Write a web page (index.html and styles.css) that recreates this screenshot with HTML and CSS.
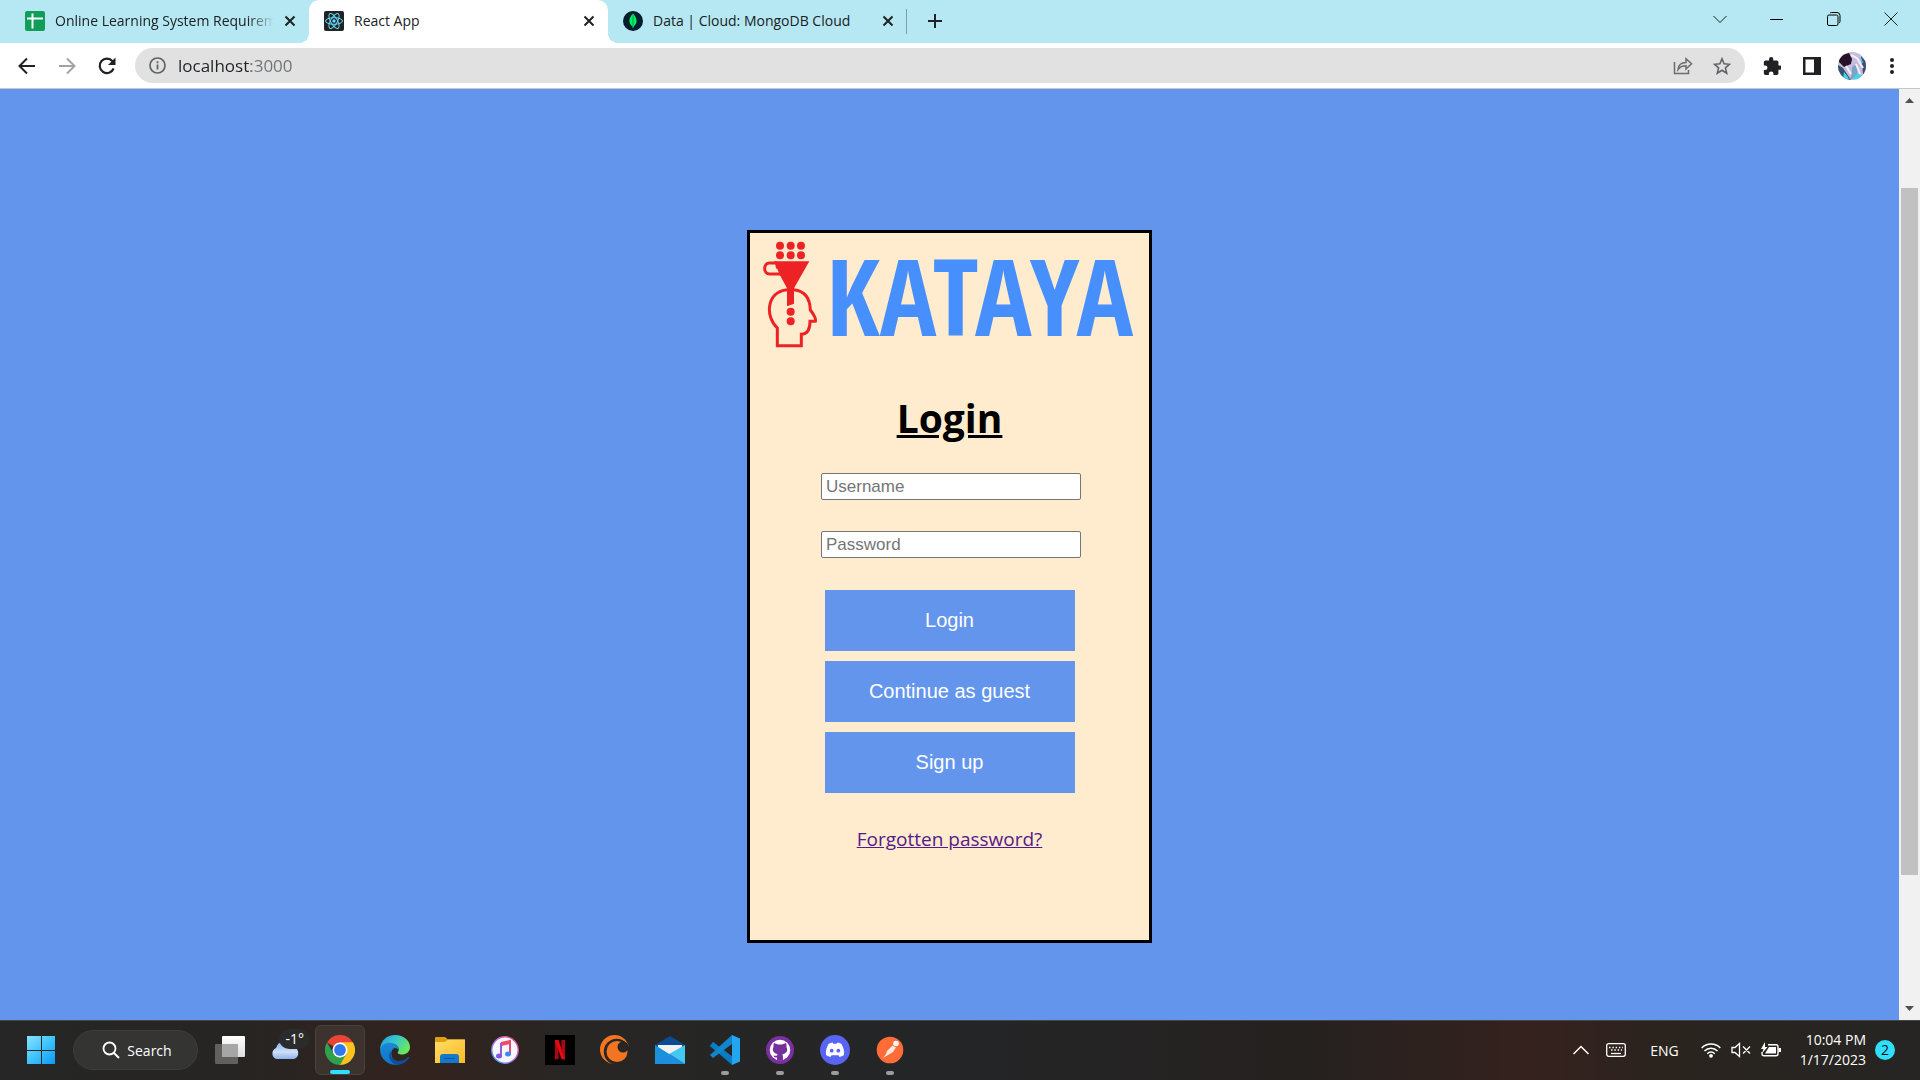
FILE: index.html
```html
<!DOCTYPE html>
<html lang="en">
<head>
<meta charset="utf-8">
<title>React App</title>
<meta name="viewport" content="width=device-width, initial-scale=1">
<link rel="stylesheet" href="styles.css">
</head>
<body>
<header class="browser">
  <div class="tabstrip">
    <div class="tab">
      <svg class="favicon" viewBox="0 0 20 20"><rect width="20" height="20" rx="2" fill="#0f9d58"/><path d="M2 7.500h16M7.500 2.500v15" stroke="#fff" stroke-width="2"/></svg>
      <span class="tab-title fade">Online Learning System Requirements</span>
      <button class="tab-close" aria-label="Close tab"><svg width="12" height="12" viewBox="0 0 12 12"><path d="M1.500 1.500l9 9M10.500 1.500l-9 9" stroke="#202124" stroke-width="2"/></svg></button>
    </div>
    <div class="tab active">
      <svg class="favicon" viewBox="0 0 20 20"><rect width="20" height="20" rx="2" fill="#222"/><g fill="none" stroke="#61dafb" stroke-width="1"><ellipse cx="10" cy="10" rx="8.500" ry="3.300"/><ellipse cx="10" cy="10" rx="8.500" ry="3.300" transform="rotate(60 10 10)"/><ellipse cx="10" cy="10" rx="8.500" ry="3.300" transform="rotate(120 10 10)"/></g><circle cx="10" cy="10" r="1.700" fill="#61dafb"/></svg>
      <span class="tab-title">React App</span>
      <button class="tab-close" aria-label="Close tab"><svg width="12" height="12" viewBox="0 0 12 12"><path d="M1.500 1.500l9 9M10.500 1.500l-9 9" stroke="#202124" stroke-width="2"/></svg></button>
    </div>
    <div class="tab last">
      <svg class="favicon" viewBox="0 0 20 20"><circle cx="10" cy="10" r="10" fill="#001e2b"/><path d="M10 2.500C13 6 13.600 8 13.600 10c0 2.600-1.600 4.400-3 5.500L10.300 17h-.6l-.3-1.500C8 14.400 6.400 12.600 6.400 10c0-2 .6-4 3.600-7.500z" fill="#00ed64"/><path d="M10 3v13" stroke="#00a94b" stroke-width="1"/></svg>
      <span class="tab-title">Data | Cloud: MongoDB Cloud</span>
      <button class="tab-close" aria-label="Close tab"><svg width="12" height="12" viewBox="0 0 12 12"><path d="M1.500 1.500l9 9M10.500 1.500l-9 9" stroke="#202124" stroke-width="2"/></svg></button>
    </div>
    <button class="new-tab" aria-label="New tab"><svg width="16" height="16" viewBox="0 0 16 16"><path d="M8 1v14M1 8h14" stroke="#202124" stroke-width="2"/></svg></button>
    <div class="window-controls">
      <button aria-label="Search tabs"><svg width="14" height="14" viewBox="0 0 14 14"><path d="M.5 4L7 10.500 13.500 4" fill="none" stroke="#222"/></svg></button>
      <button aria-label="Minimize"><svg width="14" height="14" viewBox="0 0 14 14"><path d="M0 7.500h13" stroke="#000"/></svg></button>
      <button aria-label="Restore"><svg width="14" height="14" viewBox="0 0 14 14"><g fill="none" stroke="#000"><rect x=".5" y="3" width="10.500" height="10.500" rx="1.500"/><path d="M3 1.200Q3.500.5 4.500.5H10q3 0 3 3v6q0 1-1 1.500"/></g></svg></button>
      <button aria-label="Close"><svg width="14" height="14" viewBox="0 0 14 14"><path d="M.5.5l13 13M13.500.5l-13 13" stroke="#222"/></svg></button>
    </div>
  </div>
  <div class="toolbar">
    <button class="nav" aria-label="Back"><svg width="20" height="20" viewBox="0 0 20 20"><path d="M18 10H3M10 2.500L2.500 10l7.500 7.500" fill="none" stroke="#202124" stroke-width="2"/></svg></button>
    <button class="nav" aria-label="Forward"><svg width="20" height="20" viewBox="0 0 20 20"><path d="M2 10h15M10 2.500l7.500 7.500-7.500 7.500" fill="none" stroke="#a3a4a5" stroke-width="2"/></svg></button>
    <button class="nav" aria-label="Reload"><svg width="20" height="20" viewBox="0 0 20 20"><path d="M16.600 12.500A7.200 7.200 0 1 1 15.500 5.300" fill="none" stroke="#202124" stroke-width="2.200"/><path d="M18.500 1.500v7.500h-7.500z" fill="#202124"/></svg></button>
    <div class="omnibox">
      <svg width="17" height="17" viewBox="0 0 17 17"><circle cx="8.500" cy="8.500" r="7.500" fill="none" stroke="#5f6368" stroke-width="1.700"/><path d="M8.500 7.500v5M8.500 4.300v1.900" stroke="#5f6368" stroke-width="1.800"/></svg>
      <input class="address" type="text" aria-label="Address" value="localhost:3000">
      <button aria-label="Share"><svg width="20" height="18" viewBox="0 0 20 18"><path d="M1.500 5v11.500h14V13M5 12.500c.5-5 3.500-7 8-7V1.800l5.500 5L13 12V8.800c-4 0-6 1-8 3.700z" fill="none" stroke="#6b6d70" stroke-width="1.500"/></svg></button>
      <button aria-label="Bookmark"><svg width="18" height="18" viewBox="0 0 18 18"><path d="M9 1.800l2.100 5 5.400.5-4.100 3.600 1.300 5.300L9 13.300l-4.700 2.900 1.300-5.300L1.500 7.300l5.400-.5z" fill="none" stroke="#5f6368" stroke-width="1.600"/></svg></button>
    </div>
    <div class="tools">
      <button aria-label="Extensions"><svg width="18" height="18" viewBox="1 1 21 21"><path d="M20.500 11H19V7c0-1.100-.9-2-2-2h-4V3.500a2.500 2.500 0 0 0-5 0V5H4c-1.100 0-2 .9-2 2v3.800h1.500a2.700 2.700 0 0 1 0 5.400H2V20c0 1.100.9 2 2 2h3.800v-1.500a2.700 2.700 0 0 1 5.400 0V22H17c1.100 0 2-.9 2-2v-4h1.500a2.500 2.500 0 0 0 0-5z" fill="#202124"/></svg></button>
      <button aria-label="Side panel"><svg width="18" height="18" viewBox="0 0 18 18"><path fill-rule="evenodd" d="M0 0h18v18H0zM2.500 2.500v13H11v-13z" fill="#202124"/></svg></button>
      <button aria-label="Profile"><svg width="28" height="28" viewBox="0 0 28 28"><clipPath id="face"><circle cx="14" cy="14" r="14"/></clipPath><g clip-path="url(#face)"><rect width="28" height="28" fill="#c5bddb"/><path d="M1 4l10-3 3 6-1 5-7 3-5-5z" fill="#28112b"/><path d="M0 13l5 3 4 6 4 6H0z" fill="#35516e"/><path d="M15 14c5-4 6 4 3 13h-7c5-4 1-9 4-13z" fill="#7ba3c4"/><path d="M6 20l4 5 1 3H5zM14 27l5-5 5 1-3 5z" fill="#43d4ef"/><path d="M23 4l6 7v13l-4-2z" fill="#3f4d72"/><path d="M13 3l6 3 6 10M8 14l5 8M18 12l4 10" stroke="#f4eefb" stroke-width="2" fill="none"/><path d="M22 5l3 6" stroke="#42d3ed"/></g></svg></button>
      <button aria-label="Menu"><svg width="6" height="18" viewBox="0 0 6 18"><g fill="#202124"><circle cx="3" cy="3" r="2"/><circle cx="3" cy="9" r="2"/><circle cx="3" cy="15" r="2"/></g></svg></button>
    </div>
  </div>
</header>

<div class="viewport">
  <main class="page">
    <form class="card">
      <div class="logo">
        <svg class="logo-mark" viewBox="36 48 168 324"><g fill="#ed2224"><circle cx="90" cy="62" r="12"/><circle cx="122" cy="62" r="12"/><circle cx="153" cy="62" r="12"/><circle cx="90" cy="91" r="12"/><circle cx="122" cy="91" r="12"/><circle cx="153" cy="91" r="12"/><path d="M72 109H178L132 190V236L111 244V190L90 151z"/><circle cx="122" cy="260" r="12"/><circle cx="122" cy="289" r="12"/></g><g fill="none" stroke="#ed2224" stroke-width="9"><path d="M92 147H59C39 147 39 114 59 114H78Q86 124 78 128"/><path d="M111 194C50 200 44 274 82 309V362H154V328Q180 328 180 289H196Q200 280 181 255C180 220 165 198 132 194"/></g></svg>
        <span class="logo-name">KATAYA</span>
      </div>
      <h1 class="title">Login</h1>
      <div class="fields">
        <input class="field" type="text" placeholder="Username" aria-label="Username">
        <input class="field" type="password" placeholder="Password" aria-label="Password">
      </div>
      <div class="actions">
        <button type="button">Login</button>
        <button type="button">Continue as guest</button>
        <button type="button">Sign up</button>
      </div>
      <a class="forgot" href="#forgot">Forgotten password?</a>
    </form>
  </main>
  <div class="scrollbar">
    <svg class="arrow" viewBox="0 0 21 26"><path d="M6 14l4.500-5 4.500 5z" fill="#505050"/></svg>
    <div class="track-before"></div>
    <div class="thumb"></div>
    <div class="track-after"></div>
    <svg class="arrow" viewBox="0 0 21 26"><path d="M6 12l4.500 5 4.500-5z" fill="#505050"/></svg>
  </div>
</div>

<footer class="taskbar">
  <button class="app" aria-label="Start"><svg viewBox="0 0 30 30"><defs><linearGradient id="win" x1="0" y1="0" x2="30" y2="30" gradientUnits="userSpaceOnUse"><stop stop-color="#8fe5ff"/><stop offset=".5" stop-color="#3ec4fb"/><stop offset="1" stop-color="#0894f8"/></linearGradient></defs><path d="M1 1h14v14H1zM16 1h13v14H16zM1 16h14v13H1zM16 16h13v13H16z" fill="url(#win)"/></svg></button>
  <button class="search"><svg width="18" height="18" viewBox="0 0 18 18"><circle cx="7.500" cy="7.500" r="6" fill="none" stroke="#fff" stroke-width="1.800"/><path d="M12 12l5 5" stroke="#fff" stroke-width="2"/></svg>Search</button>
  <div class="apps">
    <button class="app" aria-label="Task view"><svg viewBox="0 0 30 30"><defs><linearGradient id="tv" x1="0" y1="0" x2="0" y2="1"><stop stop-color="#fff"/><stop offset="1" stop-color="#ddd"/></linearGradient></defs><rect x="7" y="1" width="23" height="21" rx="1" fill="url(#tv)"/><rect x="0" y="9" width="23" height="20" rx="1" fill="#6b6b6b" fill-opacity=".85"/><path d="M7 9h16v13H7z" fill="#a6a6a6"/></svg></button>
    <button class="app" aria-label="Weather"><svg viewBox="0 0 30 30"><defs><linearGradient id="cl" x1="0" y1="0" x2="0" y2="1"><stop stop-color="#7eaaf0"/><stop offset=".6" stop-color="#cfe0f8"/><stop offset="1" stop-color="#8fb1ec"/></linearGradient></defs><path d="M6 24a6 6 0 0 1 0-11 9 9 0 0 1 17-1 6.200 6.200 0 0 1 1 12z" fill="url(#cl)"/></svg><span class="temp">-1°</span></button>
    <button class="app current" aria-label="Chrome"><svg viewBox="0 0 30 30"><path d="M15 15L2 7.500A15 15 0 0 1 28 7.500z" fill="#e94435"/><path d="M15 15V7.500H28A15 15 0 0 1 15 30z" fill="#fcc31e"/><path d="M8.500 18.800L2 7.500A15 15 0 0 0 15 30l6.500-11.300z" fill="#2fa04c"/><path d="M15 7.500H28L21.500 18.800z" fill="#fcc31e"/><circle cx="15" cy="15" r="7.500" fill="#fff"/><circle cx="15" cy="15" r="5.900" fill="#3079ed"/></svg></button>
    <button class="app" aria-label="Edge"><svg viewBox="0 0 30 30"><defs><linearGradient id="e1" x1="0" y1="0" x2="1" y2=".5"><stop stop-color="#1e9cdd"/><stop offset=".5" stop-color="#36c6cf"/><stop offset="1" stop-color="#68e85c"/></linearGradient><linearGradient id="e2" x1="0" y1="0" x2="0" y2="1"><stop stop-color="#1b88d8"/><stop offset="1" stop-color="#1173c5"/></linearGradient></defs><path d="M0 14C1 5 7 0 15 0c9 0 15 6 15 12 0 5-4 7.500-8 7.500-3 0-5-1-4-2.500 2-3 0-8-6-8-5 0-10 2-12 5z" fill="url(#e1)"/><path d="M0 14C2 9 7 7 11 8c5 0 8 4 7.500 8-1-4-6-4-7 1-1 6 4 11 9 12C11 32 0 26 0 14z" fill="url(#e2)"/><path d="M12 15c-3 3-1 10 6 11 4 0 7-1 10-4 1-.5 1.500.5 1 1-3 5-8 7-13 6.600C9 27 7 19 12 15z" fill="#0d4f9e"/></svg></button>
    <button class="app" aria-label="File Explorer"><svg viewBox="0 0 30 30"><defs><linearGradient id="fo" x1="0" y1="0" x2="1" y2="1"><stop stop-color="#ffdc68"/><stop offset="1" stop-color="#fcbc24"/></linearGradient></defs><path d="M0 3q0-1 1-1h9l3 2.500H29q1 0 1 1V12H0z" fill="#dfa00e"/><path d="M0 7h10l3-2.500h17V28H0z" fill="url(#fo)"/><path d="M5 28v-6q0-3 3-3h13q3 0 3 3v6z" fill="#1478cb"/><path d="M9 23.500h11" stroke="#07579e"/></svg></button>
    <button class="app" aria-label="iTunes"><svg viewBox="0 0 30 30"><defs><linearGradient id="it" x1="1" y1="0" x2="0" y2="1"><stop stop-color="#fa4965"/><stop offset=".5" stop-color="#b467e8"/><stop offset="1" stop-color="#37a9f8"/></linearGradient></defs><circle cx="15" cy="15" r="13.200" fill="#f7f7fb" stroke="url(#it)" stroke-width="1.400"/><path d="M11 8l9-2v13" fill="none" stroke="#ef4771" stroke-width="2"/><path d="M11 9.500l9-2" stroke="#f04e65" stroke-width="3"/><path d="M11 8v13" stroke="#9a58de" stroke-width="2"/><ellipse cx="9" cy="21" rx="3" ry="2.500" fill="#7c59e2"/><ellipse cx="18" cy="19" rx="3" ry="2.500" fill="#3b8cf0"/></svg></button>
    <button class="app" aria-label="Netflix"><svg viewBox="0 0 30 30"><path d="M0 0h30v30H0z" fill="#000"/><path d="M10 5h3.500v19l-3.500.5zM16.500 5H20v19.500l-3.500-.5z" fill="#b1060f"/><path d="M10 5h3.500L20 24.500 16.500 24z" fill="#e50914"/></svg></button>
    <button class="app" aria-label="Crunchyroll"><svg viewBox="0 0 30 30"><circle cx="14.500" cy="14.500" r="14.500" fill="#f47521"/><circle cx="16.800" cy="16.800" r="13" fill="#272624"/><circle cx="17" cy="16.500" r="10.500" fill="#f47521"/><circle cx="23" cy="12" r="5.500" fill="#272624"/></svg></button>
    <button class="app" aria-label="Mail"><svg viewBox="0 0 30 30"><path d="M0 10L15 1l15 9v8H0z" fill="#0b4b91"/><path d="M3 10h24v7l-12 5L3 17z" fill="#f1f1f1"/><path d="M0 10l30 19H0z" fill="#1b91dc"/><path d="M30 10v19L14 19z" fill="#42c8f3"/><path d="M0 29l15-10 15 10z" fill="#1d8ede"/></svg></button>
    <button class="app running" aria-label="Visual Studio Code"><svg viewBox="0 0 30 30"><path d="M3 7L22 22v8L0 11z" fill="#0277bd"/><path d="M0 11l3-4 20 15v7z" fill="#0a7cc4"/><path d="M0 20l3 3L22 9V0z" fill="#1186ce"/><path d="M22 0l8 3.500v23L22 30z" fill="#25a4ef"/></svg></button>
    <button class="app running" aria-label="GitHub Desktop"><svg viewBox="0 0 30 30"><circle cx="15" cy="15" r="14" fill="#7c2fa1"/><circle cx="15" cy="15" r="10.300" fill="#fff"/><path d="M9 8l4 1.600h4L21 8q1 2 .4 3.800c2.200 4-.4 7.200-4.200 7.600 1 1 .8 3 .8 6h-6v-3q-3 .5-3.500-2 2 .8 3.500 0 .1-.8.800-1.200c-4-.4-6.200-4-4.200-7.400Q8 10 9 8z" fill="#76309b"/></svg></button>
    <button class="app running" aria-label="Discord"><svg viewBox="0 0 30 30"><circle cx="15" cy="15" r="15" fill="#5865f2"/><path d="M8.500 9q2-1.200 4-1.500l.8 1.300h3.400l.8-1.300q2 .3 4 1.500c2 3.500 3 7 2.500 11q-2.300 1.700-4.500 2l-1-1.800h-7l-1 1.800q-2.200-.3-4.500-2c-.5-4 .5-7.500 2.500-11z" fill="#fff"/><circle cx="11.700" cy="15.700" r="1.900" fill="#5865f2"/><circle cx="18.300" cy="15.700" r="1.900" fill="#5865f2"/></svg></button>
    <button class="app running" aria-label="Postman"><svg viewBox="0 0 30 30"><circle cx="15" cy="15" r="13.300" fill="#ff6c37"/><circle cx="21" cy="8.500" r="2.800" fill="#fff"/><path d="M17.500 10.500L12 16l-1 3-3 4 5-3 5-3 3-4.500z" fill="#fde9e0"/></svg></button>
  </div>
  <div class="tray">
    <button aria-label="Show hidden icons"><svg width="16" height="10" viewBox="0 0 16 10"><path d="M.5 9L8 1.500 15.500 9" fill="none" stroke="#fff" stroke-width="1.500"/></svg></button>
    <button aria-label="Touch keyboard"><svg width="20" height="14" viewBox="0 0 20 14"><rect x=".7" y=".7" width="18.600" height="12.600" rx="2" fill="none" stroke="#fff" stroke-width="1.300"/><path d="M3 4.500h14M5 7h11" stroke="#fff" stroke-width="1.500" stroke-dasharray="1.500 1.800"/><path d="M5 10.500h10" stroke="#fff" stroke-width="1.300"/></svg></button>
    <span class="lang">ENG</span>
    <button class="status" aria-label="Network, sound and battery">
      <svg width="20" height="16" viewBox="0 0 20 16"><g fill="none" stroke="#fff" stroke-width="1.500"><path d="M.7 6a13 13 0 0 1 18.600 0M3.500 9a9 9 0 0 1 13 0M6.300 11.700a5 5 0 0 1 7.400 0"/></g><circle cx="10" cy="13.800" r="1.900" fill="#fff"/></svg>
      <svg width="20" height="16" viewBox="0 0 20 16"><path d="M1 5.500h3L8.500 1.500v13L4 10.500H1zM12 4.500l7 7M19 4.500l-7 7" fill="none" stroke="#fff" stroke-width="1.300"/></svg>
      <svg width="20" height="16" viewBox="0 0 20 16"><path d="M7 2.700h8q2 0 2 2v7q0 2-2 2H3q-2 0-2-2V10" fill="none" stroke="#fff" stroke-width="1.400"/><path d="M8 5h7v6.500H4zM17.500 6H20v4h-2.500zM4 0L0 7h2.500L1 11.500 6.500 5H4z" fill="#fff"/></svg>
    </button>
    <div class="clock"><time>10:04 PM</time><time>1/17/2023</time></div>
    <span class="badge">2</span>
  </div>
</footer>
</body>
</html>
```
FILE: styles.css
```css
* { box-sizing: border-box; }

body {
  margin: 0;
  min-height: 100vh;
  display: flex;
  flex-direction: column;
  font-family: "Open Sans", "Noto Sans", sans-serif;
  font-size: 14px;
  color: #202124;
}

button {
  border: 0;
  padding: 0;
  background: none;
  font: inherit;
  color: inherit;
  display: flex;
  align-items: center;
  justify-content: center;
}

svg { flex: none; display: block; }

/* Browser frame */
.browser { border-bottom: 1px solid #c4c6c8; background: #fff; }

.tabstrip {
  display: flex;
  align-items: stretch;
  height: 43px;
  padding-left: 10px;
  background: #b5e8f2;
}

.tab {
  display: flex;
  align-items: center;
  gap: 10px;
  flex: 0 1 299px;
  min-width: 0;
  padding: 0 13px 2px 15px;
}

.tab.active {
  position: relative;
  background: #fff;
  border-radius: 10px 10px 0 0;
}

.tab.active::before,
.tab.active::after {
  content: "";
  position: absolute;
  bottom: 0;
  width: 10px;
  height: 10px;
}

.tab.active::before { right: 100%; background: radial-gradient(circle at 0 0, #b5e8f2 10px, #fff 10px); }
.tab.active::after { left: 100%; background: radial-gradient(circle at 100% 0, #b5e8f2 10px, #fff 10px); }

.tab.last { background: linear-gradient(#7f9da5, #7f9da5) right center / 1px 25px no-repeat; }

.favicon { width: 20px; height: 20px; }

.tab-title { flex: 1; overflow: hidden; white-space: nowrap; }
.fade { -webkit-mask-image: linear-gradient(90deg, #000 88%, transparent); mask-image: linear-gradient(90deg, #000 88%, transparent); }

.new-tab { width: 56px; padding-bottom: 1px; }

.window-controls { display: flex; margin-left: auto; padding: 0 1px 6px 0; }
.window-controls button { width: 57px; }

.toolbar {
  display: flex;
  align-items: center;
  height: 45px;
  padding: 0 8px 0 7px;
}

.nav { width: 40px; height: 40px; }

.omnibox {
  display: flex;
  align-items: center;
  flex: 1;
  height: 35px;
  margin-left: 8px;
  padding: 0 4px 0 14px;
  border-radius: 18px;
  background: #e1e1e1;
}

.omnibox button { width: 39px; height: 35px; }

.address {
  flex: 1;
  min-width: 0;
  border: 0;
  padding: 0;
  margin-left: 12px;
  font: 17px/24px "Open Sans", sans-serif;
  color: transparent;
  background: linear-gradient(90deg, #202124 73px, #6f7173 73px);
  -webkit-background-clip: text;
  background-clip: text;
}

.tools { display: flex; align-items: center; padding-left: 7px; }
.tools button { width: 40px; height: 40px; }

/* Web page */
.viewport { flex: 1; display: flex; background: #6495ed; }

.page {
  flex: 1;
  display: flex;
  justify-content: center;
  align-items: flex-start;
  padding: 141px 16px 77px;
}

.card {
  display: flex;
  flex-direction: column;
  align-items: center;
  width: 405px;
  max-width: 100%;
  padding: 8px 12px 86px;
  border: 3px solid #000;
  background: #ffebcd;
}

.logo { display: flex; align-items: center; align-self: stretch; gap: 8px; }
.logo-mark { width: 56px; height: 108px; }

.logo-name {
  font: bold 106px/108px "Noto Sans ExtraCondensed", "Open Sans Condensed", "Liberation Sans Narrow", "Liberation Sans", sans-serif;
  color: #468ffc;
}

.title {
  margin: 41px 0 27px;
  font-size: 39px;
  line-height: 56px;
  text-decoration: underline;
  color: #000;
}

.fields { display: flex; flex-direction: column; gap: 31px; padding-left: 3px; }

.field {
  width: 260px;
  height: 27px;
  padding: 0 4px;
  border: 1px solid #767676;
  border-radius: 2px;
  font: 17px "Liberation Sans", Arial, sans-serif;
  background: #fff;
}

.field::placeholder { color: #757575; }

.actions { display: flex; flex-direction: column; gap: 10px; margin: 32px 0 31px; }

.actions button {
  width: 250px;
  height: 61px;
  font: 20px "Liberation Sans", Arial, sans-serif;
  color: #fff;
  background: #6495ed;
}

.forgot { font-size: 19px; line-height: 30px; color: #551a8b; }

.scrollbar {
  display: flex;
  flex-direction: column;
  width: 21px;
  padding: 0 2px;
  background: #f1f1f1;
}

.arrow { width: 21px; height: 26px; align-self: center; }
.track-before { flex: 73; }
.thumb { flex: 687; background: #c1c1c1; }
.track-after { flex: 119; }

/* Desktop taskbar */
.taskbar {
  display: flex;
  align-items: center;
  height: 60px;
  padding: 0 25px 1px 16px;
  border-top: 1px solid #464645;
  color: #fff;
  background: linear-gradient(90deg, #262626 0, #262523 12%, #33231e 22%, #272624 30%, #242527 50%, #25211f 68%, #35221e 80%, #29241f 88%, #262523 100%);
}

.app { position: relative; width: 50px; height: 50px; border-radius: 6px; }
.app svg { width: 30px; height: 30px; }
.apps { display: flex; gap: 5px; margin-left: 7px; }

.search {
  width: 125px;
  height: 40px;
  margin-left: 7px;
  gap: 7px;
  padding-left: 3px;
  border: 1px solid #3d3d3c;
  border-radius: 20px;
  background: #343433;
}

.current { background: #3c322e; border: 1px solid #4a403c; }

.current::after,
.running::after {
  content: "";
  position: absolute;
  bottom: 0;
  left: 50%;
  margin-left: -4px;
  width: 8px;
  height: 4px;
  border-radius: 2px;
  background: #9c9c9c;
}

.current::after { width: 20px; margin-left: -10px; background: #2fdfff; }

.temp {
  position: absolute;
  top: 4px;
  right: 0;
  padding: 0 6px;
  border-radius: 10px;
  line-height: 20px;
  background: #2b2b2b;
}

.tray { display: flex; align-items: center; margin-left: auto; }
.tray > button:first-child { margin-right: 17px; }
.lang { margin: 0 22px 0 24px; }
.status { gap: 10px; }
.clock { display: flex; flex-direction: column; align-items: flex-end; margin-left: 19px; line-height: 20px; }

.badge {
  width: 20px;
  height: 20px;
  margin-left: 9px;
  border-radius: 50%;
  font-size: 14px;
  line-height: 20px;
  text-align: center;
  color: #111;
  background: #2fdfff;
}
```
